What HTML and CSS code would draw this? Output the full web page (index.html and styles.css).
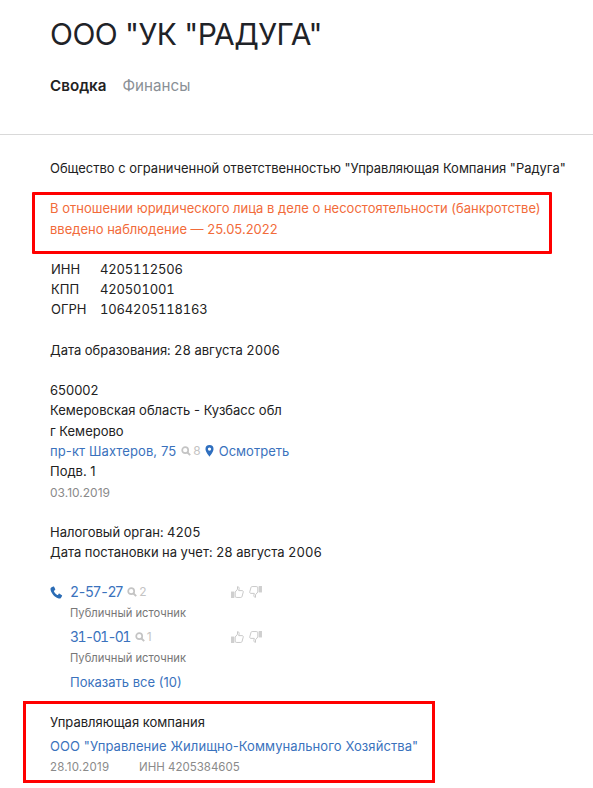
FILE: index.html
```html
<!DOCTYPE html>
<html lang="ru">
<head>
<meta charset="utf-8">
<title>ООО "УК "РАДУГА"</title>
<link rel="stylesheet" href="styles.css">
</head>
<body>
<header class="head">
  <h1 class="title">ООО "УК "РАДУГА"</h1>
  <nav class="tabs"><span class="tab active">Сводка</span><span class="tab">Финансы</span></nav>
</header>
<main class="content">
  <p class="fullname">Общество с ограниченной ответственностью "Управляющая Компания "Радуга"</p>
  <div class="alert">В отношении юридического лица в деле о несостоятельности (банкротстве) введено наблюдение — 25.05.2022</div>
  <dl class="codes">
    <div class="code"><dt>ИНН</dt><dd>4205112506</dd></div>
    <div class="code"><dt>КПП</dt><dd>420501001</dd></div>
    <div class="code"><dt>ОГРН</dt><dd>1064205118163</dd></div>
  </dl>
  <p class="founded">Дата образования: 28 августа 2006</p>
  <div class="address">
    <div>650002</div>
    <div>Кемеровская область - Кузбасс обл</div>
    <div>г Кемерово</div>
    <div class="addr-line">
      <a class="link street">пр-кт Шахтеров, 75</a>
      <span class="count"><svg class="lens" viewBox="0 0 10 10"><circle cx="4.2" cy="4.2" r="3" fill="none" stroke="#c4c4c4" stroke-width="1.7"/><path d="M6.5 6.5 9.2 9.2" stroke="#c4c4c4" stroke-width="1.9"/></svg>8</span>
      <svg class="pin" viewBox="0 0 10 14"><path fill-rule="evenodd" fill="#2f6fbf" d="M5 0a4.7 4.7 0 0 0-4.7 4.7C.3 8 5 13.6 5 13.6S9.7 8 9.700 4.700A4.700 4.700 0 0 0 5 0Zm0 6.600a1.900 1.900 0 1 1 0-3.800 1.900 1.900 0 0 1 0 3.800Z"/></svg>
      <a class="link">Осмотреть</a>
    </div>
    <div>Подв. 1</div>
    <div class="date">03.10.2019</div>
  </div>
  <div class="tax">
    <div>Налоговый орган: 4205</div>
    <div>Дата постановки на учет: 28 августа 2006</div>
  </div>
  <div class="phones">
    <svg class="phone-icon" viewBox="0 0 14 14"><path fill="#2b6cb5" d="M3.4.6 1.3 1.7C.5 2.2.4 3.4.8 4.8c.9 3.300 4.400 7.300 7.900 8.500 1.500.5 2.500.2 3-.5l1.300-1.900c.2-.4.100-.8-.2-1L10.300 8.300c-.4-.2-.8-.1-1 .2l-.8 1.100c-.2.200-.4.200-.7.100C6.300 8.900 5 7.500 4.300 5.900c-.1-.3-.1-.5.100-.7l1-.9c.3-.2.400-.6.200-1L4.400.9C4.200.5 3.800.4 3.400.6Z"/></svg>
    <div class="phone">
      <div class="phone-row">
        <div class="phone-num"><a class="link num">2-57-27</a><span class="count"><svg class="lens" viewBox="0 0 10 10"><circle cx="4.200" cy="4.200" r="3" fill="none" stroke="#c4c4c4" stroke-width="1.700"/><path d="M6.500 6.500 9.200 9.200" stroke="#c4c4c4" stroke-width="1.900"/></svg>2</span></div>
        <div class="votes">
          <svg class="thumb" viewBox="0 0 14 13"><path fill="#cfcfcf" d="M0 6h3.500v7H0z"/><path fill="#fff" stroke="#c4c4c4" d="M4.500 6.500 7 3.500V.7c1.200 0 1.800.9 1.800 2L8.300 5H12c1 0 1.400.8 1.200 1.700l-1.300 4.700c-.2.700-.7 1-1.300 1H6.300c-.8 0-1.300-.3-1.800-.7Z"/></svg>
          <svg class="thumb" viewBox="0 0 14 13"><path fill="#cfcfcf" d="M10.500 0H14v7h-3.500z"/><path fill="#fff" stroke="#c4c4c4" d="M9.500 6.500 7 9.500v2.800c-1.200 0-1.800-.9-1.800-2L5.700 8H2C1 8 .6 7.200.8 6.300L2.100 1.600C2.300.9 2.800.6 3.400.6h4.300c.8 0 1.300.3 1.800.7Z"/></svg>
        </div>
      </div>
      <div class="source">Публичный источник</div>
      <div class="phone-row second">
        <div class="phone-num"><a class="link num">31-01-01</a><span class="count"><svg class="lens" viewBox="0 0 10 10"><circle cx="4.200" cy="4.200" r="3" fill="none" stroke="#c4c4c4" stroke-width="1.700"/><path d="M6.500 6.500 9.200 9.200" stroke="#c4c4c4" stroke-width="1.900"/></svg>1</span></div>
        <div class="votes">
          <svg class="thumb" viewBox="0 0 14 13"><path fill="#cfcfcf" d="M0 6h3.500v7H0z"/><path fill="#fff" stroke="#c4c4c4" d="M4.500 6.500 7 3.500V.7c1.200 0 1.800.9 1.800 2L8.300 5H12c1 0 1.400.8 1.200 1.700l-1.300 4.700c-.2.700-.7 1-1.300 1H6.300c-.8 0-1.300-.3-1.800-.7Z"/></svg>
          <svg class="thumb" viewBox="0 0 14 13"><path fill="#cfcfcf" d="M10.500 0H14v7h-3.500z"/><path fill="#fff" stroke="#c4c4c4" d="M9.500 6.500 7 9.500v2.800c-1.200 0-1.800-.9-1.800-2L5.700 8H2C1 8 .6 7.200.8 6.300L2.100 1.600C2.300.9 2.800.6 3.400.6h4.300c.8 0 1.300.3 1.800.7Z"/></svg>
        </div>
      </div>
      <div class="source">Публичный источник</div>
      <a class="link show-all">Показать все (10)</a>
    </div>
  </div>
  <section class="manager">
    <div class="mgr-title">Управляющая компания</div>
    <a class="link mgr-name">ООО "Управление Жилищно-Коммунального Хозяйства"</a>
    <div class="mgr-meta"><span class="mgr-date">28.10.2019</span><span>ИНН 4205384605</span></div>
  </section>
</main>
</body>
</html>
```
FILE: styles.css
```css
* { box-sizing: border-box; }
html, body { margin: 0; padding: 0; }
body {
  width: 593px;
  height: 788px;
  overflow: hidden;
  background: #fff;
  color: #222;
  font: 13px/20px Inter, "Liberation Sans", sans-serif;
}
.head { padding: 12px 0 0 50px; height: 135px; border-bottom: 1px solid #d9d9d9; }
.title { margin: 0; font-size: 30px; line-height: 44px; font-weight: 400; letter-spacing: -.55px; color: #1f2328; }
.tabs { display: flex; gap: 16px; margin-top: 18px; font-size: 15.2px; line-height: 24px; }
.tab { color: #8a9096; }
.tab.active { color: #222; font-weight: 600; }
.content { padding: 23px 0 0 50px; }
.fullname { margin: 0; letter-spacing: -.03px; }
.alert {
  width: 520px;
  height: 62px;
  margin: 14px 0 0 -18px;
  padding: 3px 0 0 15px;
  border: 3px solid #f00;
  border-radius: 1px;
  color: #f26b3a;
  line-height: 21px;
}
.codes { margin: 5px 0 0 1px; }
.code { display: flex; }
.code dt { width: 49px; }
.code dd { margin: 0; font-variant-numeric: tabular-nums; letter-spacing: -.15px; }
.founded { margin: 21px 0 0; font-variant-numeric: tabular-nums; }
.address { margin-top: 20px; line-height: 20.3px; }
.addr-line { display: flex; align-items: center; }
.link { color: #3a72bd; }
.street { letter-spacing: .1px; }
.num { font-size: 14px; font-variant-numeric: tabular-nums; letter-spacing: -1.6px; }
.count { display: inline-flex; align-items: center; gap: 2px; margin-left: 5px; font-size: 12px; color: #c4c4c4; }
.lens { width: 10px; height: 10px; }
.pin { width: 9px; height: 12px; margin: 0 5px 0 4px; }
.date { margin-top: 2px; font-size: 12px; color: #8a8a8a; }
.tax { margin-top: 18px; font-variant-numeric: tabular-nums; }
.phones { display: flex; margin-top: 20px; }
.phone-icon { width: 13px; height: 13px; margin: 4px 7px 0 0; }
.phone { width: 192px; }
.phone-row { display: flex; justify-content: space-between; }
.phone-row.second { margin-top: 4px; }
.phone-num { display: flex; align-items: center; }
.votes { display: flex; gap: 5px; align-items: center; }
.thumb { width: 13px; height: 12px; }
.source { margin-top: 1px; font-size: 11.2px; line-height: 20px; color: #777; }
.show-all { display: block; margin-top: 4px; }
.manager {
  width: 412px;
  height: 82px;
  margin: 9px 0 0 -27px;
  padding: 8px 0 0 24px;
  border: 3px solid #f00;
}
.mgr-name { display: block; margin-top: 4px; letter-spacing: .08px; }
.mgr-meta { display: flex; margin-top: 1px; font-size: 11.5px; color: #8a8a8a; }
.mgr-date { width: 89px; letter-spacing: .2px; }
```
